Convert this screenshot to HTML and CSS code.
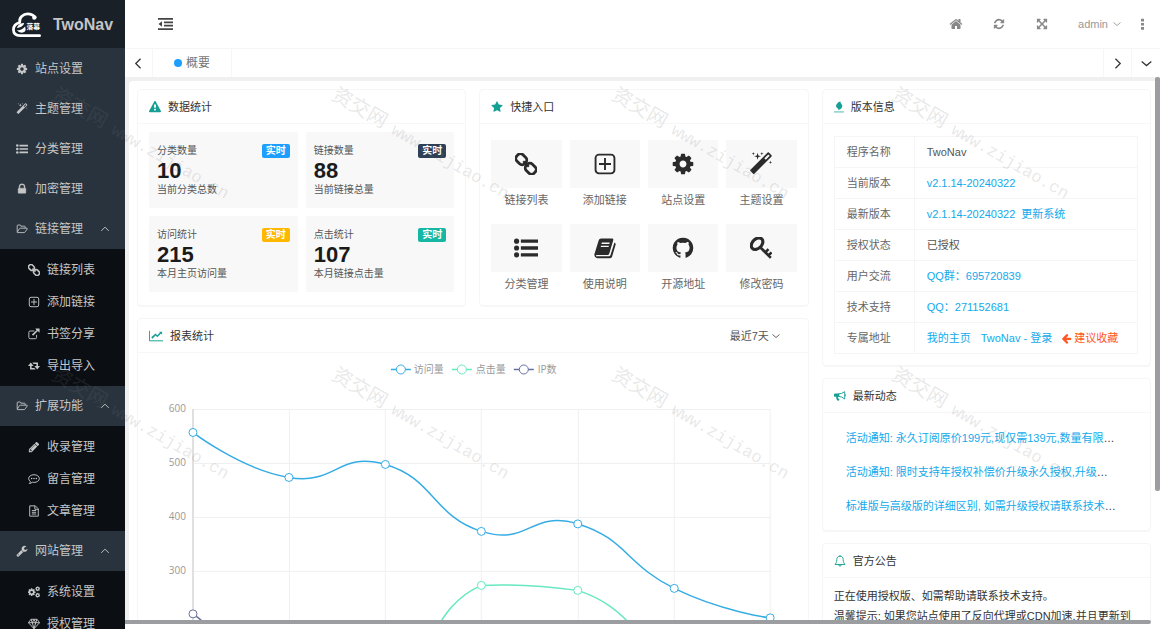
FILE: index.html
```html
<!DOCTYPE html>
<html lang="zh-CN">
<head>
<meta charset="utf-8">
<title>TwoNav</title>
<link rel="stylesheet" href="styles.css">
</head>
<body>
<svg class="sprite" aria-hidden="true">
  <symbol id="cog" viewBox="0 0 1792 1792"><path d="M1152 896q0-106-75-181t-181-75-181 75-75 181 75 181 181 75 181-75 75-181zm512-109v222q0 12-8 23t-20 13l-185 28q-19 54-39 91 35 50 107 138 10 12 10 25t-9 23q-27 37-99 108t-94 71q-12 0-26-9l-138-108q-44 23-91 38-16 136-29 186-7 28-36 28h-222q-14 0-24.500-8.500t-11.500-21.500l-28-184q-49-16-90-37l-141 107q-10 9-25 9-14 0-25-11-126-114-165-168-7-10-7-23 0-12 8-23 15-21 51-66.500t54-70.500q-27-50-41-99l-183-27q-13-2-21-12.500t-8-23.500v-222q0-12 8-23t19-13l186-28q14-46 39-92-40-57-107-138-10-12-10-24 0-10 9-23 26-36 98.500-107.500t94.500-71.500q13 0 26 10l138 107q44-23 91-38 16-136 29-186 7-28 36-28h222q14 0 24.500 8.500t11.500 21.500l28 184q49 16 90 37l142-107q9-9 24-9 13 0 25 10 129 119 165 170 7 8 7 22 0 12-8 23-15 21-51 66.500t-54 70.500q26 50 41 98l183 28q13 2 21 12.500t8 23.500z"/></symbol>
  <symbol id="magic" viewBox="0 0 1792 1792"><path d="M1254 581l293-293-107-107-293 293zm447-293q0 27-18 45l-1286 1286q-18 18-45 18t-45-18l-198-198q-18-18-18-45t18-45l1286-1286q18-18 45-18t45 18l198 198q18 18 18 45zm-1351-190l98 30-98 30-30 98-30-98-98-30 98-30 30-98zm350 162l196 60-196 60-60 196-60-196-196-60 196-60 60-196zm930 478l98 30-98 30-30 98-30-98-98-30 98-30 30-98zm-640-640l98 30-98 30-30 98-30-98-98-30 98-30 30-98z"/></symbol>
  <symbol id="list" viewBox="0 0 28 28"><circle cx="3" cy="6" r="3"/><circle cx="3" cy="14" r="3"/><circle cx="3" cy="22" r="3"/><path d="M8 4h20v4H8zM8 12h20v4H8zM8 20h20v4H8z"/></symbol>
  <symbol id="lock" viewBox="0 0 28 28"><path d="M9 12h10V9a5 5 0 0 0-10 0zM23 13.500v9a1.500 1.500 0 0 1-1.500 1.500h-15A1.500 1.500 0 0 1 5 22.500v-9A1.500 1.500 0 0 1 6.500 12H7V9a7 7 0 0 1 14 0v3h.5a1.500 1.500 0 0 1 1.500 1.500z" stroke="currentColor"/></symbol>
  <symbol id="folder" viewBox="0 0 30 28"><path d="M3 21V6q0-2 2-2h5q2 0 2 2v1h9q2 0 2 2v3M3 22l5-8q1-2 3-2h16q2 0 1 2l-5 7q-1 2-3 2H4q-2 0-1-1z" class="line"/></symbol>
  <symbol id="link" viewBox="0 0 28 28"><g transform="rotate(45 14 14)" fill="none" stroke="currentColor" stroke-width="3.600"><rect x="-1.500" y="8.500" width="14" height="11" rx="4.500"/><rect x="15.500" y="8.500" width="14" height="11" rx="4.500"/><path d="M9 14h10" stroke-width="3"/></g></symbol>
  <symbol id="plus" viewBox="0 0 28 28"><rect x="3" y="3" width="22" height="22" rx="4" class="line"/><path d="M14 7v14M7 14h14" class="line"/></symbol>
  <symbol id="share" viewBox="0 0 28 28"><path d="M15 7H5q-3 0-3 3v12q0 3 3 3h12q3 0 3-3v-6" class="line"/><path d="M17 1h10v10l-4-4-11 11-3-3L20 5z"/></symbol>
  <symbol id="retweet" viewBox="0 0 30 28"><path d="M7 5L0 14h5v9h14l-3-4H9v-5h5zM23 23l7-9h-5V5H11l3 4h7v5h-5z"/></symbol>
  <symbol id="pencil" viewBox="0 0 1792 1792"><path d="M491 1536l91-91-235-235-91 91v107h128v128h107zm523-928q0-22-22-22-10 0-17 7l-542 542q-7 7-7 17 0 22 22 22 10 0 17-7l542-542q7-7 7-17zm-54-192l416 416-832 832h-416v-416zm683 96q0 53-37 90l-166 166-416-416 166-165q36-38 90-38 53 0 91 38l235 234q37 39 37 91z"/></symbol>
  <symbol id="comment" viewBox="0 0 28 28"><path d="M14 4c7 0 12.500 4 12.500 9S21 22 14 22q-2 0-4-.5-3 3-7 3 3-3 2.500-5Q1.500 17 1.500 13C1.500 8 7 4 14 4z" class="line"/><circle cx="8.500" cy="13" r="1.800"/><circle cx="14" cy="13" r="1.800"/><circle cx="19.500" cy="13" r="1.800"/></symbol>
  <symbol id="file" viewBox="0 0 28 28"><path d="M4 2h13l7 7v17H4zM16 2v8h8M9 13h10M9 17h10M9 21h10" class="line"/></symbol>
  <symbol id="wrench" viewBox="0 0 1792 1792"><path d="M448 1472q0-26-19-45t-45-19-45 19-19 45 19 45 45 19 45-19 19-45zm644-420l-682 682q-37 37-90 37-52 0-91-37l-106-108q-38-36-38-90 0-53 38-91l681-681q39 98 114.500 173.500t173.500 114.500zm634-435q0 39-23 106-47 134-164.500 217.500t-258.500 83.500q-185 0-316.500-131.500t-131.500-316.500 131.500-316.500 316.500-131.500q58 0 121.500 16.500t107.500 46.500q16 11 16 28t-16 28l-293 169v224l193 107q5-3 79-48.500t135.500-81 70.500-35.500q15 0 23.500 10t8.500 25z"/></symbol>
  <symbol id="cogs" viewBox="0 0 28 28"><use href="#cog" x="-2" y="4" width="21" height="21"/><use href="#cog" x="16" y="0" width="13" height="13"/><use href="#cog" x="16" y="15" width="13" height="13"/></symbol>
  <symbol id="diamond" viewBox="0 0 28 28"><path d="M7 3h14l6 8-13 14L1 11zM1 11h26M7 3l3 8 4 14 4-14 3-8M10 11l4-8 4 8" class="line"/></symbol>
  <symbol id="warning" viewBox="0 0 1792 1792"><path d="M1024 1375v-190q0-14-9.500-23.500t-22.500-9.500h-192q-13 0-22.500 9.500t-9.500 23.500v190q0 14 9.500 23.500t22.500 9.500h192q13 0 22.500-9.500t9.500-23.500zm-2-374l18-459q0-12-10-19-13-11-24-11h-220q-11 0-24 11-10 7-10 21l17 457q0 10 10 16.500t24 6.500h185q14 0 23.500-6.500t10.500-16.500zm-14-934l768 1408q35 63-2 126-17 29-46.500 46t-63.500 17h-1536q-34 0-63.500-17t-46.500-46q-37-63-2-126l768-1408q17-31 47-49t65-18 65 18 47 49z"/></symbol>
  <symbol id="star" viewBox="0 0 1792 1792"><path d="M1728 647q0 22-26 48l-363 354 86 500q1 7 1 20 0 21-10.500 35.500t-30.500 14.500q-19 0-40-12l-449-236-449 236q-22 12-40 12-21 0-31.500-14.500t-10.500-35.500q0-6 2-20l86-500-364-354q-25-27-25-48 0-37 56-46l502-73 225-455q19-41 49-41t49 41l225 455 502 73q56 9 56 46z"/></symbol>
  <symbol id="book" viewBox="0 0 28 28"><path d="M9 2h14q2 0 1.500 2l-5 17q-.5 2-2.500 2H4q-2 0-1.500 1.500H19q1.500 0 2-1.500L26 7q2 1 1.500 3l-4.500 15q-1 2-3 2H4q-4-1-3.500-5L6 4q.6-2 3-2zM10 7l-.5 1.800h10L20 7zM9 11l-.5 1.800h10L19 11z" fill-rule="evenodd"/></symbol>
  <symbol id="github" viewBox="0 0 1792 1792"><path d="M896 128q209 0 385.500 103t279.500 279.500 103 385.500q0 251-146.500 451.500t-378.500 277.500q-27 5-40-7t-13-30q0-3 .5-76.500t.5-134.500q0-97-52-142 57-6 102.500-18t94-39 81-66.500 53-105 20.500-150.500q0-119-79-206 37-91-8-204-28-9-81 11t-92 44l-38 24q-93-26-192-26t-192 26q-16-11-42.500-27t-83.500-38.500-85-13.500q-45 113-8 204-79 87-79 206 0 85 20.500 150t52.500 105 80.500 67 94 39 102.500 18q-39 36-49 103-21 10-45 15t-57 5-65.500-21.500-55.500-62.500q-19-32-48.500-52t-49.500-24l-20-3q-21 0-29 4.500t-5 11.500 9 14 13 12l7 5q22 10 43.500 38t31.500 51l10 23q13 38 44 61.500t67 30 69.500 7 55.500-3.500l23-4q0 38 .5 88.500t.5 54.500q0 18-13 30t-40 7q-232-77-378.500-277.500t-146.500-451.500q0-209 103-385.500t279.500-279.500 385.500-103z"/></symbol>
  <symbol id="key" viewBox="0 0 28 28"><g fill="none" stroke="currentColor"><ellipse cx="9" cy="8.500" rx="8.500" ry="6" transform="rotate(-45 9 8.500)" stroke-width="4"/><path d="M13 13l13.500 13.500M19.500 19.500l4-4M23.500 23.500l4-4" stroke-width="3.400"/></g></symbol>
  <symbol id="home" viewBox="0 0 1792 1792"><path d="M1472 992v480q0 26-19 45t-45 19h-384v-384h-256v384h-384q-26 0-45-19t-19-45v-480q0-1 .5-3t.5-3l575-474 575 474q1 2 1 6zm223-69l-62 74q-8 9-21 11h-3q-13 0-21-7l-692-577-692 577q-12 8-24 7-13-2-21-11l-62-74q-8-10-7-23.500t11-21.500l719-599q32-26 76-26t76 26l244 204v-195q0-14 9-23t23-9h192q14 0 23 9t9 23v408l219 182q10 8 11 21.500t-7 23.500z"/></symbol>
  <symbol id="refresh" viewBox="0 0 1792 1792"><path d="M1639 1056q0 5-1 7-64 268-268 434.500t-478 166.500q-146 0-282.500-55t-243.500-157l-129 129q-19 19-45 19t-45-19-19-45v-448q0-26 19-45t45-19h448q26 0 45 19t19 45-19 45l-137 137q71 66 161 102t187 36q134 0 250-65t186-179q11-17 53-117 8-23 30-23h192q13 0 22.500 9.500t9.500 22.500zm25-800v448q0 26-19 45t-45 19h-448q-26 0-45-19t-19-45 19-45l138-138q-148-137-349-137-134 0-250 65t-186 179q-11 17-53 117-8 23-30 23h-199q-13 0-22.500-9.500t-9.500-22.500v-7q65-268 270-434.500t480-166.500q146 0 284 55.500t245 156.500l130-129q19-19 45-19t45 19 19 45z"/></symbol>
  <symbol id="expand" viewBox="0 0 1792 1792"><path d="M1411 541l-355 355 355 355 144-144q29-31 70-14 39 17 39 59v448q0 26-19 45t-45 19h-448q-42 0-59-40-17-39 14-69l144-144-355-355-355 355 144 144q31 30 14 69-17 40-59 40h-448q-26 0-45-19t-19-45v-448q0-42 40-59 39-17 69 14l144 144 355-355-355-355-144 144q-19 19-45 19-12 0-24-5-40-17-40-59v-448q0-26 19-45t45-19h448q42 0 59 40 17 39-14 69l-144 144 355 355 355-355-144-144q-31-30-14-69 17-40 59-40h448q26 0 45 19t19 45v448q0 42-39 59-13 5-25 5-26 0-45-19z"/></symbol>
  <symbol id="arrow" viewBox="0 0 1792 1792"><path d="M1664 896v128q0 53-32.500 90.500t-84.500 37.500h-704l293 294q38 36 38 90t-38 90l-75 76q-37 37-90 37-52 0-91-37l-651-652q-37-37-37-90 0-52 37-91l651-650q38-38 91-38 52 0 90 38l75 74q38 38 38 91t-38 91l-293 293h704q52 0 84.500 37.500t32.500 90.500z"/></symbol>
  <symbol id="outdent" viewBox="0 0 30 24"><path d="M0 0h30v3.500H0zM12 7h18v3.500H12zM12 13.500h18V17H12zM0 20.500h30V24H0zM8 6.500v11L1 12z"/></symbol>
  <symbol id="flame" viewBox="0 0 28 32"><path d="M18 0q-1 4 2.500 7 5 5 1.500 11-3.500 5-11 7 3-3 0-5-8-4-4-11 3-6 11-9z"/><path d="M0 28h28v3.500H0z" opacity=".6"/></symbol>
  <symbol id="chart" viewBox="0 0 32 24"><path d="M1 0v23h31" class="line"/><path d="M23 2h7v7l-2.500-2.500L19 15l-4-4-7 7-3-3L15 6l4 4 6-6z"/></symbol>
  <symbol id="horn" viewBox="0 0 28 26"><path d="M25 3v17Q18 14 11 14V8q7 0 14-5z" class="line"/><path d="M26 9q2 0 2 2.500T26 14zM3 7h9v8H9q0 4 4 7-1 3-6 1-2-4-2-8H3q-3 0-3-2V9q0-2 3-2z"/></symbol>
  <symbol id="bell" viewBox="0 0 28 28"><path d="M14 3c-5 0-7.500 3-7.500 8 0 6-2 9-4.500 11h24c-2.500-2-4.500-5-4.500-11 0-5-2.500-8-7.500-8zM14 0v3M11 22q0 4 3 4t3-4" class="line"/></symbol>
  <symbol id="up" viewBox="0 0 16 16"><path d="M2 11l6-6 6 6" fill="none" stroke="currentColor" stroke-width="1.500"/></symbol>
  <symbol id="down" viewBox="0 0 16 16"><path d="M1 5l7 6 7-6" fill="none" stroke="currentColor" stroke-width="1.800"/></symbol>
  <symbol id="left" viewBox="0 0 16 16"><path d="M11 1L4 8l7 7" fill="none" stroke="currentColor" stroke-width="1.800"/></symbol>
  <symbol id="right" viewBox="0 0 16 16"><path d="M5 1l7 7-7 7" fill="none" stroke="currentColor" stroke-width="1.800"/></symbol>
  <symbol id="dots" viewBox="0 0 6 16"><path d="M1 1h4v3.500H1zM1 6.500h4V10H1zM1 12h4v3.500H1z"/></symbol>
</svg>

<div class="app">
  <aside class="sidebar">
    <a class="brand" href="#">
      <svg class="brand-logo" viewBox="0 0 32 26" aria-hidden="true">
        <path d="M8 10C7 5 12 1.500 16 1.500q5 0 8 3.500M8 10.500q-6.500 1.500-6.500 7.500 0 6 7 6h20" fill="none" stroke="#fff" stroke-width="2.800" stroke-linecap="round"/>
        <circle cx="23" cy="5.500" r="2.200"/>
        <path d="M5 16q2-5 7.500-5 0 2-2.500 3.500T5 16zM5 18.500q5 0 8.500-4 1.500 5-1.500 6-4 1.500-7-2z"/>
        <text x="15" y="17.500" class="brand-mark">落幕</text>
      </svg>
      <span>TwoNav</span>
    </a>
    <nav class="menu">
      <a class="item" href="#"><svg class="ico"><use href="#cog"/></svg>站点设置</a>
      <a class="item" href="#"><svg class="ico"><use href="#magic"/></svg>主题管理</a>
      <a class="item" href="#"><svg class="ico"><use href="#list"/></svg>分类管理</a>
      <a class="item" href="#"><svg class="ico"><use href="#lock"/></svg>加密管理</a>
      <a class="item" href="#"><svg class="ico"><use href="#folder"/></svg>链接管理<svg class="caret"><use href="#up"/></svg></a>
      <div class="submenu">
        <a href="#"><svg class="ico"><use href="#link"/></svg>链接列表</a>
        <a href="#"><svg class="ico"><use href="#plus"/></svg>添加链接</a>
        <a href="#"><svg class="ico"><use href="#share"/></svg>书签分享</a>
        <a href="#"><svg class="ico"><use href="#retweet"/></svg>导出导入</a>
      </div>
      <a class="item" href="#"><svg class="ico"><use href="#folder"/></svg>扩展功能<svg class="caret"><use href="#up"/></svg></a>
      <div class="submenu">
        <a href="#"><svg class="ico"><use href="#pencil"/></svg>收录管理</a>
        <a href="#"><svg class="ico"><use href="#comment"/></svg>留言管理</a>
        <a href="#"><svg class="ico"><use href="#file"/></svg>文章管理</a>
      </div>
      <a class="item" href="#"><svg class="ico"><use href="#wrench"/></svg>网站管理<svg class="caret"><use href="#up"/></svg></a>
      <div class="submenu">
        <a href="#"><svg class="ico"><use href="#cogs"/></svg>系统设置</a>
        <a href="#"><svg class="ico"><use href="#diamond"/></svg>授权管理</a>
      </div>
    </nav>
  </aside>

  <div class="main">
    <header class="topbar">
      <button class="fold" aria-label="折叠菜单"><svg><use href="#outdent"/></svg></button>
      <div class="tools">
        <button class="tool" aria-label="主页"><svg class="ico-14"><use href="#home"/></svg></button>
        <button class="tool" aria-label="刷新"><svg class="ico"><use href="#refresh"/></svg></button>
        <button class="tool" aria-label="全屏"><svg class="ico"><use href="#expand"/></svg></button>
        <button class="user">admin<svg class="ico-8"><use href="#down"/></svg></button>
        <button class="more" aria-label="更多"><svg><use href="#dots"/></svg></button>
      </div>
    </header>
    <div class="tabs">
      <button class="tab-btn tab-prev" aria-label="向左"><svg class="ico-11"><use href="#left"/></svg></button>
      <a class="tab" href="#"><i class="dot"></i>概要</a>
      <button class="tab-btn tab-next" aria-label="向右"><svg class="ico-11"><use href="#right"/></svg></button>
      <button class="tab-btn tab-menu" aria-label="标签菜单"><svg class="ico-11"><use href="#down"/></svg></button>
    </div>

    <div class="frame">
      <div class="page">
        <section class="card">
          <h2 class="card-head"><svg class="ico"><use href="#warning"/></svg>数据统计</h2>
          <div class="stats">
            <div class="stat"><div class="stat-top">分类数量<b class="badge blue">实时</b></div><strong>10</strong><p>当前分类总数</p></div>
            <div class="stat"><div class="stat-top">链接数量<b class="badge navy">实时</b></div><strong>88</strong><p>当前链接总量</p></div>
            <div class="stat"><div class="stat-top">访问统计<b class="badge amber">实时</b></div><strong>215</strong><p>本月主页访问量</p></div>
            <div class="stat"><div class="stat-top">点击统计<b class="badge teal">实时</b></div><strong>107</strong><p>本月链接点击量</p></div>
          </div>
        </section>

        <section class="card">
          <h2 class="card-head"><svg class="ico"><use href="#star"/></svg>快捷入口</h2>
          <div class="quick">
            <a href="#"><span class="tile"><svg><use href="#link"/></svg></span>链接列表</a>
            <a href="#"><span class="tile"><svg class="wide"><use href="#plus"/></svg></span>添加链接</a>
            <a href="#"><span class="tile"><svg class="wide"><use href="#cog"/></svg></span>站点设置</a>
            <a href="#"><span class="tile"><svg class="wide"><use href="#magic"/></svg></span>主题设置</a>
            <a href="#"><span class="tile"><svg class="wide"><use href="#list"/></svg></span>分类管理</a>
            <a href="#"><span class="tile"><svg><use href="#book"/></svg></span>使用说明</a>
            <a href="#"><span class="tile"><svg class="wide"><use href="#github"/></svg></span>开源地址</a>
            <a href="#"><span class="tile"><svg><use href="#key"/></svg></span>修改密码</a>
          </div>
        </section>

        <section class="card report">
          <h2 class="card-head"><svg class="ico-14"><use href="#chart"/></svg>报表统计
            <span class="range"><select aria-label="统计范围"><option>最近7天</option></select><svg class="ico-8"><use href="#down"/></svg></span>
          </h2>
          <svg class="plot" viewBox="-1 0 670 360" role="img" aria-label="访问量、点击量和IP数">
            <g class="grid">
              <path d="M54 56.500h578M54 110.500h578M54 164.500h578M54 218.500h578M54 272.500h578M150.500 56v300M246.500 56v300M342.500 56v300M439.500 56v300M535.500 56v300M631.500 56v300"/>
            </g>
            <path d="M54 56v300" class="axis"/>
            <g class="ticks">
              <text x="47" y="59">600</text><text x="47" y="113">500</text><text x="47" y="167">400</text><text x="47" y="221">300</text>
            </g>
            <g class="series purple"><path d="M54 261q6 4 12 10"/><circle cx="54" cy="261" r="4"/></g>
            <g class="series green"><path d="M290 290C304 262 318 243 342.500 232.500C375 231 405 233 439 237.500C465 246 480 258 500 280"/><circle cx="342.500" cy="232.500" r="4"/><circle cx="439" cy="237.500" r="4"/></g>
            <g class="series sky"><path d="M54 79.500C54 79.500 102 116.500 150 124.500C198 132.500 198.500 98 246.500 111.500C294.500 125 294.500 163.500 342.500 178.500C390.500 193.500 391 156.750 439 171C487 185.250 487.500 212 535.500 235.500C583.500 259 631.500 265 631.500 265"/>
              <circle cx="54" cy="79.500" r="4"/><circle cx="150" cy="124.500" r="4"/><circle cx="246.500" cy="111.500" r="4"/><circle cx="342.500" cy="178.500" r="4"/><circle cx="439" cy="171" r="4"/><circle cx="535.500" cy="235.500" r="4"/><circle cx="631.500" cy="265" r="4"/></g>
            <g class="series sky"><path d="M252 16.500h20"/><circle cx="262" cy="16.500" r="4.500"/></g>
            <g class="series green"><path d="M313 16.500h20"/><circle cx="323" cy="16.500" r="4.500"/></g>
            <g class="series purple"><path d="M375 16.500h20"/><circle cx="385" cy="16.500" r="4.500"/></g>
            <g class="legend"><text x="275" y="20">访问量</text><text x="337" y="20">点击量</text><text x="399" y="20">IP数</text></g>
          </svg>
        </section>

        <div class="side">
          <section class="card">
            <h2 class="card-head"><svg class="ico-narrow"><use href="#flame"/></svg>版本信息</h2>
            <div class="table-box">
              <table class="info">
                <tr><th scope="row">程序名称</th><td>TwoNav</td></tr>
                <tr><th scope="row">当前版本</th><td><a href="#">v2.1.14-20240322</a></td></tr>
                <tr><th scope="row">最新版本</th><td><a href="#">v2.1.14-20240322</a><a class="near" href="#">更新系统</a></td></tr>
                <tr><th scope="row">授权状态</th><td>已授权</td></tr>
                <tr><th scope="row">用户交流</th><td><a href="#">QQ群：695720839</a></td></tr>
                <tr><th scope="row">技术支持</th><td><a href="#">QQ：271152681</a></td></tr>
                <tr><th scope="row">专属地址</th><td><a href="#">我的主页</a><a class="far" href="#">TwoNav - 登录</a><span class="tip"><svg class="ico-11"><use href="#arrow"/></svg>建议收藏</span></td></tr>
              </table>
            </div>
          </section>
          <section class="card">
            <h2 class="card-head"><svg class="ico"><use href="#horn"/></svg>最新动态</h2>
            <ul class="news">
              <li><a href="#">活动通知: 永久订阅原价199元,现仅需139元,数量有限</a>…</li>
              <li><a href="#">活动通知: 限时支持年授权补偿价升级永久授权,升级</a>…</li>
              <li><a href="#">标准版与高级版的详细区别, 如需升级授权请联系技术</a>…</li>
            </ul>
          </section>
          <section class="card">
            <h2 class="card-head"><svg class="ico"><use href="#bell"/></svg>官方公告</h2>
            <div class="notice">
              <p>正在使用授权版、如需帮助请联系技术支持。</p>
              <p>温馨提示: 如果您站点使用了反向代理或CDN加速,并且更新到</p>
            </div>
          </section>
        </div>
      </div>
      <div class="scroll-x"></div>
      <div class="scroll-y"></div>
    </div>
  </div>
</div>

<div class="watermarks" aria-hidden="true">
  <span>资交网<i>www.zijiao.cn</i></span><span>资交网<i>www.zijiao.cn</i></span><span>资交网<i>www.zijiao.cn</i></span><span>资交网<i>www.zijiao.cn</i></span>
  <span>资交网<i>www.zijiao.cn</i></span><span>资交网<i>www.zijiao.cn</i></span><span>资交网<i>www.zijiao.cn</i></span><span>资交网<i>www.zijiao.cn</i></span>
</div>
</body>
</html>
```

FILE: styles.css
```css
* { box-sizing: border-box; }
body {
  margin: 0;
  font: 11px/20px "Liberation Sans", "Noto Sans CJK SC", sans-serif;
  color: #444;
  background: #fff;
  overflow: hidden;
}
h2, p, ul { margin: 0; padding: 0; }
a { color: inherit; text-decoration: none; }
button, select {
  font: inherit;
  color: inherit;
  background: none;
  border: 0;
  padding: 0;
  cursor: pointer;
}
svg { fill: currentColor; flex: none; display: block; }
.sprite { position: absolute; width: 0; height: 0; }
.line { fill: none; stroke: currentColor; stroke-width: 2.2; stroke-linejoin: round; }
.ico { width: 12px; height: 12px; }
.ico-narrow { width: 10px; height: 12px; }
.ico-14 { width: 14px; height: 14px; }
.ico-11 { width: 11px; height: 11px; }
.ico-8 { width: 8px; height: 8px; }

.app { display: flex; height: 100vh; }

/* sidebar */
.sidebar {
  width: 125px;
  flex: none;
  overflow: hidden;
  background: #28333e;
  color: #c6c6c6;
  font-size: 12px;
}
.brand {
  display: flex;
  align-items: center;
  gap: 10px;
  height: 48px;
  padding: 1px 0 0 12px;
  background: #192027;
  font-size: 16px;
  font-weight: bold;
  color: #c4c5c6;
}
.brand-logo { width: 31px; height: 26px; fill: #fff; }
.brand-mark { font: bold 7px "Noto Sans CJK SC", sans-serif; }
.menu { padding-top: 1px; }
.item, .submenu a { display: flex; align-items: center; }
.item { height: 40px; gap: 7px; padding: 0 15px 0 16px; }
.caret { width: 10px; height: 10px; margin-left: auto; }
.submenu { padding: 5px 0 4px; background: #0b0f13; }
.submenu a { height: 32px; gap: 7px; padding-left: 28px; }

/* top */
.main { flex: 1; min-width: 0; display: flex; flex-direction: column; }
.topbar {
  display: flex;
  align-items: center;
  justify-content: space-between;
  height: 49px;
  flex: none;
  padding: 0 8px 0 33px;
  border-bottom: 1px solid #f6f6f6;
  color: #888;
}
.fold { color: #444; }
.fold svg { width: 15px; height: 12px; }
.tools { display: flex; align-items: center; }
.tool { width: 43px; height: 30px; display: grid; place-items: center; }
.user { display: flex; align-items: center; gap: 5px; padding: 0 12px 0 15px; color: #999; }
.more { width: 19px; display: grid; place-items: center; }
.more svg { width: 5px; height: 12px; }
.tabs { display: flex; height: 28px; flex: none; color: #333; }
.tab-btn { display: grid; place-items: center; width: 28px; }
.tab-prev { border-right: 1px solid #f6f6f6; }
.tab-next { margin-left: auto; border-left: 1px solid #f6f6f6; }
.tab-menu { border-left: 1px solid #f6f6f6; width: 29px; }
.tab {
  display: flex;
  align-items: center;
  gap: 4px;
  padding: 0 21px;
  font-size: 12px;
  color: #777;
  border-right: 1px solid #f6f6f6;
}
.dot { width: 8px; height: 8px; border-radius: 50%; background: #1e9fff; }

/* content */
.frame {
  position: relative;
  flex: 1;
  min-height: 0;
  overflow: hidden;
  padding: 4px 0 0 4px;
  background: #f0f0f0;
}
.page {
  display: grid;
  grid-template-columns: repeat(3, minmax(0, 1fr));
  grid-template-rows: auto 1fr;
  gap: 12px 13px;
  padding: 8px 9px 12px 8px;
  background: #fff;
  border-radius: 4px 0 0 0;
}
.report { grid-column: 1 / 3; grid-row: 2; }
.side {
  grid-column: 3;
  grid-row: 1 / 3;
  display: flex;
  flex-direction: column;
  gap: 12px;
}
.card { border: 1px solid #f6f6f6; border-radius: 4px; box-shadow: 0 1px 1px #f7f7f7; }
.card-head {
  display: flex;
  align-items: center;
  gap: 7px;
  height: 34px;
  padding: 0 11px;
  border-bottom: 1px solid #f7f7f7;
  font-size: 11px;
  font-weight: normal;
  color: #333;
}
.card-head > svg { color: #16a094; }

.stats { display: grid; grid-template-columns: 1fr 1fr; gap: 8px; padding: 8px 11px 13px; }
.stat { height: 76px; padding: 11px 8px 0; background: #f8f8f8; border-radius: 2px; font-size: 10px; line-height: 16px; color: #555; }
.stat-top { display: flex; justify-content: space-between; align-items: center; }
.stat strong { display: block; font-size: 22px; line-height: 23px; color: #1b1b1b; }
.badge { padding: 0 4px; border-radius: 2px; line-height: 14px; color: #fff; }
.blue { background: #1e9fff; }
.navy { background: #2f4056; }
.amber { background: #ffb800; }
.teal { background: #16b8a3; }

.quick {
  display: grid;
  grid-template-columns: repeat(4, 1fr);
  gap: 12px 8px;
  padding: 16px 11px 9px;
  text-align: center;
  line-height: 24px;
  color: #666;
}
.tile { display: grid; place-items: center; height: 48px; background: #f8f8f8; color: #2b2b2b; }
.tile svg { width: 22px; height: 22px; }
.tile .wide { width: 24px; height: 24px; }

.range { display: flex; align-items: center; gap: 2px; margin-left: auto; padding-right: 17px; color: #555; }
.range select { appearance: none; }
.plot { width: 100%; height: auto; }
.grid path { fill: none; stroke: #f0f0f0; }
.axis { stroke: #e0e0e0; stroke-width: 2; }
.ticks text { font: 10px "Open Sans", sans-serif; fill: #999; text-anchor: end; }
.legend text { font: 10px "Open Sans", "Noto Sans CJK SC", sans-serif; fill: #999; }
.series path { fill: none; stroke-width: 1.5; }
.series circle { fill: #fff; stroke-width: 1; }
.sky { stroke: #36ace4; }
.green { stroke: #67e8c0; }
.purple { stroke: #68709f; }

.table-box { padding: 12px 12px 11px 11px; }
.info { width: 100%; border-collapse: collapse; color: #555; table-layout: fixed; }
.info th, .info td { height: 31px; padding: 0 12px; border: 1px solid #f5f5f5; font-weight: normal; text-align: left; line-height: 20px; white-space: nowrap; }
.info th { width: 80px; color: #666; }
.info a, .news a { color: #12aaeb; }
.near { margin-left: 6px; }
.far { margin-left: 10px; }
.tip { display: inline-flex; align-items: center; gap: 2px; margin-left: 9px; color: #ff5722; vertical-align: top; }

.news { list-style: none; padding: 8px 11px 7px; }
.news li { padding: 0 0 0 12px; line-height: 34px; white-space: nowrap; color: #333; }
.notice { padding: 8px 11px 12px; color: #333; }
.notice p { white-space: nowrap; }

/* floating scrollbars */
.scroll-x {
  position: absolute;
  left: 0;
  right: 0;
  bottom: 0;
  height: 9px;
  background: #fff;
}
.scroll-x::before {
  content: "";
  display: block;
  height: 4px;
  margin-right: 9px;
  border-radius: 0 2px 2px 0;
  background: #9b9da1;
}
.scroll-y {
  position: absolute;
  top: 0;
  right: 0;
  width: 5px;
  height: 75%;
  border-radius: 2px;
  background: #9b9da1;
}

/* repeated diagonal watermark */
.watermarks {
  position: absolute;
  inset: 0;
  overflow: hidden;
  display: grid;
  grid-template-columns: repeat(4, 280px);
  grid-auto-rows: 280px;
  padding: 82px 0 0 60px;
  pointer-events: none;
  font: 20px/22px "Noto Sans CJK SC", sans-serif;
  color: rgba(120, 120, 120, .18);
}
.watermarks span { justify-self: start; align-self: start; white-space: nowrap; transform: rotate(30deg); transform-origin: 0 0; }
.watermarks i { margin-left: 9px; font: 17px/22px "Liberation Mono", monospace; }
```
